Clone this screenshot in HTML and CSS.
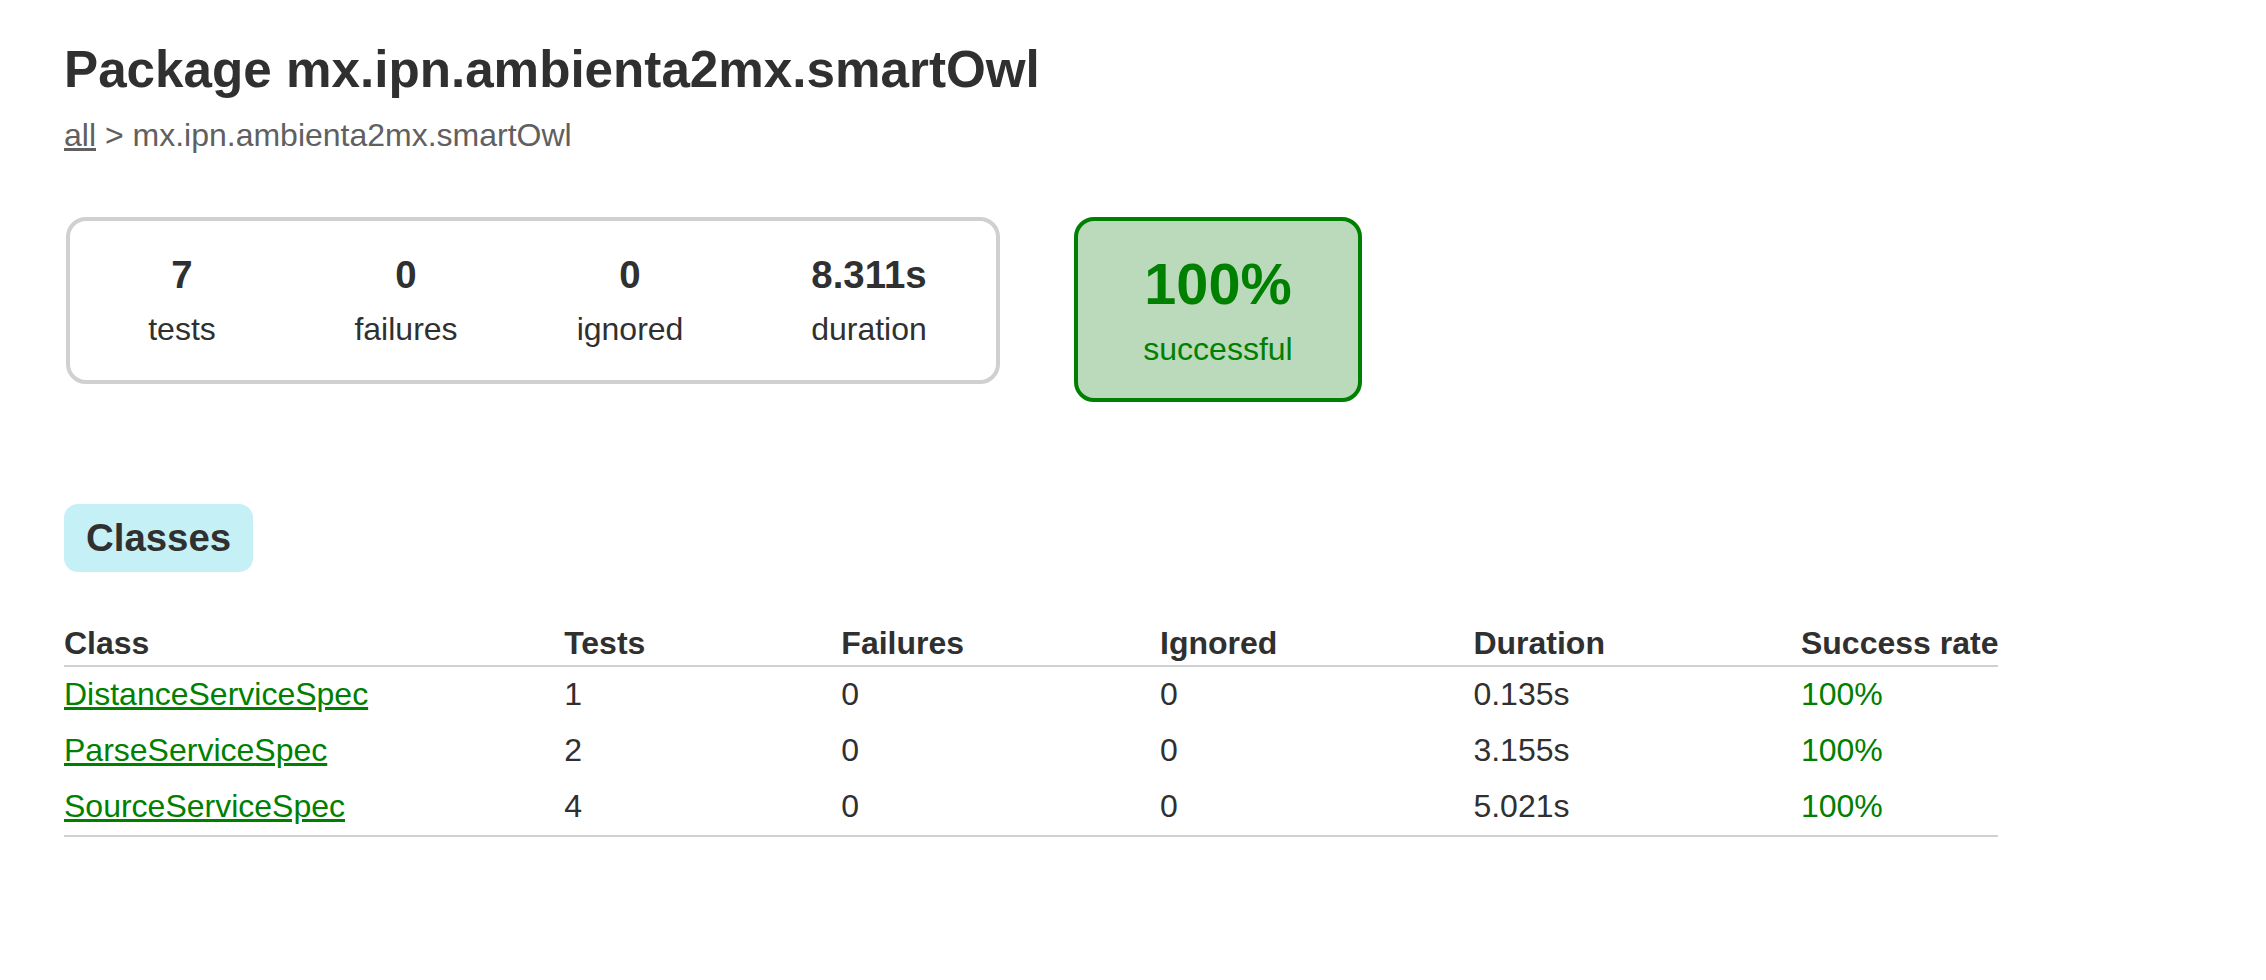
FILE: index.html
```html
<!DOCTYPE html>
<html>
<head>
<meta charset="utf-8">
<title>Test results - Package mx.ipn.ambienta2mx.smartOwl</title>
<link rel="stylesheet" href="styles.css">
</head>
<body>
<div class="content">
  <h1 class="title">Package mx.ipn.ambienta2mx.smartOwl</h1>
  <div class="breadcrumbs"><a href="#">all</a> &gt; mx.ipn.ambienta2mx.smartOwl</div>
  <div class="summary">
    <div class="summary-group">
      <div class="info-box">
        <div class="counter">7</div>
        <p class="label">tests</p>
      </div>
      <div class="info-box">
        <div class="counter">0</div>
        <p class="label">failures</p>
      </div>
      <div class="info-box">
        <div class="counter">0</div>
        <p class="label">ignored</p>
      </div>
      <div class="info-box duration">
        <div class="counter">8.311s</div>
        <p class="label">duration</p>
      </div>
    </div>
    <div class="success-rate">
      <div class="percent">100%</div>
      <p class="label">successful</p>
    </div>
  </div>
  <ul class="tab-links">
    <li class="tab-selected"><span class="tab-label">Classes</span></li>
  </ul>
  <div class="tab">
    <table class="results">
      <thead>
        <tr>
          <th>Class</th>
          <th>Tests</th>
          <th>Failures</th>
          <th>Ignored</th>
          <th>Duration</th>
          <th>Success rate</th>
        </tr>
      </thead>
      <tbody>
        <tr>
          <td class="success"><a href="#">DistanceServiceSpec</a></td>
          <td>1</td>
          <td>0</td>
          <td>0</td>
          <td>0.135s</td>
          <td class="success">100%</td>
        </tr>
        <tr>
          <td class="success"><a href="#">ParseServiceSpec</a></td>
          <td>2</td>
          <td>0</td>
          <td>0</td>
          <td>3.155s</td>
          <td class="success">100%</td>
        </tr>
        <tr>
          <td class="success"><a href="#">SourceServiceSpec</a></td>
          <td>4</td>
          <td>0</td>
          <td>0</td>
          <td>5.021s</td>
          <td class="success">100%</td>
        </tr>
      </tbody>
    </table>
  </div>
</div>
</body>
</html>
```
FILE: styles.css
```css
html, body {
  margin: 0;
  padding: 0;
  background: #ffffff;
}
body {
  font-family: "Liberation Sans", Arial, Helvetica, sans-serif;
  font-size: 32px;
  color: #303030;
}
a {
  color: #303030;
}
.content {
  padding: 40px 64px 60px 64px;
}
.title {
  font-size: 51.2px;
  font-weight: bold;
  margin: 0 0 18px 0;
  white-space: nowrap;
}
.breadcrumbs, .breadcrumbs a {
  color: #606060;
}
.summary {
  display: flex;
  align-items: flex-start;
  margin-top: 63px;
  margin-left: 2px;
}
.summary-group {
  display: flex;
  border: solid 4px #d0d0d0;
  border-radius: 20px;
  padding: 2px 0;
}
.info-box {
  width: 220px;
  margin: 0 2px;
  padding: 30px 0;
  text-align: center;
}
.info-box.duration {
  width: 250px;
}
.label {
  margin: 0;
}
.counter, .percent {
  font-size: 38.4px;
  font-weight: bold;
  margin-bottom: 14px;
}
.success-rate {
  width: 280px;
  margin-left: 74px;
  padding: 30px 0;
  text-align: center;
  border: solid 4px #008000;
  border-radius: 20px;
  background-color: #bbd9bb;
  color: #008000;
}
.success-rate .percent {
  font-size: 57.6px;
}
.tab-links {
  display: flex;
  list-style: none;
  margin: 82px 0 33px 0;
  padding: 20px 0;
}
.tab-links li {
  padding: 10px 20px;
  border: solid 2px #d4d4d4;
  border-radius: 14px;
  background-color: #f0f0f0;
  margin-right: 50px;
}
.tab-links li.tab-selected {
  background-color: #c5f0f5;
  border-color: #c5f0f5;
}
.tab-label {
  display: block;
  font-size: 38.4px;
  font-weight: bold;
  color: #303030;
}
.results {
  border-collapse: collapse;
  border-bottom: solid 2px #d0d0d0;
}
.results th {
  text-align: left;
  white-space: nowrap;
  padding: 0 0 3px 196px;
  border-bottom: solid 2px #d0d0d0;
  font-weight: bold;
}
.results td {
  white-space: nowrap;
  padding: 9px 0 10px 196px;
}
.results th:first-child, .results td:first-child {
  padding-left: 0;
}
.success, .success a {
  color: #008000;
}
```
